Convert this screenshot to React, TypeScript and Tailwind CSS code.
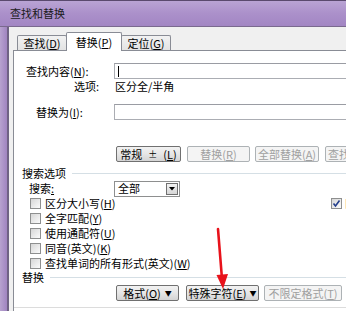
import React from 'react';

const Key = ({ k }: { k: string }) => (
  <span>
    (<span className="underline underline-offset-1">{k}</span>)
  </span>
);

const Check = ({ checked }: { checked?: boolean }) => (
  <div className="w-[11px] h-[11px] border border-[#8e8f8f] bg-gradient-to-br from-[#d6d6d6] to-[#fbfbfb] flex items-center justify-center shrink-0">
    {checked && (
      <svg width="9" height="9" viewBox="0 0 9 9">
        <path d="M1.5 4.5 L3.5 7 L7.5 1.5" fill="none" stroke="#233e8c" strokeWidth="1.6" />
      </svg>
    )}
  </div>
);

const Btn = ({ className, disabled, children }: { className: string; disabled?: boolean; children: React.ReactNode }) => (
  <div
    className={
      disabled
        ? `${className} h-[16px] shrink-0 flex items-center border border-[#adb2b5] rounded-[2px] bg-[#f4f4f4] text-[#a0a0a0]`
        : `${className} h-[16px] shrink-0 flex items-center border border-[#707070] rounded-[2px] bg-gradient-to-b from-[#f2f2f2] via-[#e6e6e6] to-[#d4d4d4] text-black`
    }
  >
    {children}
  </div>
);

const Tab = ({ selected, className, children }: { selected?: boolean; className: string; children: React.ReactNode }) => (
  <div
    className={
      selected
        ? `${className} h-[19px] -mb-[1px] relative z-10 bg-white border border-b-0 border-[#898c95] rounded-t-[2px] flex items-center justify-center`
        : `${className} h-[15px] bg-gradient-to-b from-[#f2f2f2] to-[#e3e3e3] border border-b-0 border-[#898c95] rounded-t-[2px] flex items-center justify-center`
    }
  >
    {children}
  </div>
);

const checks = [
  <>区分大小写<Key k="H" /></>,
  <>全字匹配<Key k="Y" /></>,
  <>使用通配符<Key k="U" /></>,
  <>同音(英文)<Key k="K" /></>,
  <>查找单词的所有形式(英文)<Key k="W" /></>,
];

export default function App() {
  return (
    <div className="relative w-[346px] h-[311px] overflow-hidden flex flex-col bg-[#f0f0f0] font-['Noto_Sans_CJK_SC','Noto_Sans',sans-serif] text-[11px] leading-none text-black">
      {/* title bar */}
      <div className="h-[27px] shrink-0 flex items-center pl-[10px] border-t border-[#5a4a6e] border-b border-b-[#7a6a8e] bg-gradient-to-b from-[#b9a4d4] via-[#ab90ca] to-[#a286c3] text-[#1b1b1b] text-[11px]">
        查找和替换
      </div>

      <div className="flex flex-1 min-h-0">
        {/* left frame */}
        <div className="w-[7px] shrink-0 bg-gradient-to-r from-[#b7a2cf] to-[#a084c0]" />
        <div className="w-[2px] shrink-0 bg-[#6f6284]" />

        {/* client */}
        <div className="flex-1 flex flex-col pl-[4px] min-w-0">
          {/* tabs */}
          <div className="h-[23px] shrink-0 flex items-end pl-[4px]">
            <Tab className="w-[50px]">查找<Key k="D" /></Tab>
            <Tab selected className="w-[56px] -ml-[1px]">替换<Key k="P" /></Tab>
            <Tab className="w-[50px] -ml-[1px]">定位<Key k="G" /></Tab>
          </div>

          {/* panel */}
          <div className="flex-1 w-[420px] bg-white border-l border-t border-[#898c95] flex flex-col">
            <div className="mt-[12px] h-[16px] flex items-center">
              <div className="w-[100px] pl-[12px] shrink-0">查找内容<Key k="N" />:</div>
              <div className="h-[16px] w-[300px] border border-[#abadb3] border-t-[#9a9ca3] bg-white flex items-center pl-[3px]">
                <div className="w-[1px] h-[11px] bg-black" />
              </div>
            </div>

            <div className="h-[14px] flex items-center">
              <div className="w-[100px] pl-[60px] shrink-0">选项:</div>
              <div className="pl-[1px]">区分全/半角</div>
            </div>

            <div className="mt-[11px] h-[16px] flex items-center">
              <div className="w-[100px] pl-[22px] shrink-0">替换为<Key k="I" />:</div>
              <div className="h-[16px] w-[300px] border border-[#abadb3] border-t-[#9a9ca3] bg-white" />
            </div>

            <div className="mt-[26px] flex items-center pl-[102px]">
              <Btn className="w-[65px] justify-center gap-[6px]">
                <span>常规</span>
                <span className="text-[9px]">±</span>
                <Key k="L" />
              </Btn>
              <Btn disabled className="w-[63px] ml-[6px] justify-center">替换<Key k="R" /></Btn>
              <Btn disabled className="w-[64px] ml-[5px] justify-center">全部替换<Key k="A" /></Btn>
              <Btn disabled className="w-[76px] ml-[6px] justify-start pl-[2px]">查找下一处<Key k="F" /></Btn>
            </div>

            <div className="mt-[5px] h-[12px] flex items-center pl-[8px]">
              <span>搜索选项</span>
              <div className="flex-1 ml-[6px] border-t border-[#d5dfe5]" />
            </div>

            <div className="mt-[2px] h-[15px] flex items-center">
              <div className="w-[100px] pl-[15px] shrink-0">搜索<span className="underline">:</span></div>
              <div className="w-[66px] h-[16px] border border-[#8e8f8f] bg-white flex items-center justify-between pl-[3px] pr-[1px]">
                <span>全部</span>
                <div className="w-[12px] h-[12px] border border-[#707070] bg-gradient-to-b from-[#f2f2f2] to-[#d6d6d6] flex items-center justify-center">
                  <svg width="6" height="4" viewBox="0 0 6 4">
                    <path d="M0 0 H6 L3 3.5 Z" fill="#000" />
                  </svg>
                </div>
              </div>
            </div>

            <div className="flex">
              <div className="w-[317px] shrink-0 flex flex-col pl-[16px]">
                {checks.map((c, i) => (
                  <div key={i} className="h-[15px] flex items-center gap-[4px]">
                    <Check />
                    <span>{c}</span>
                  </div>
                ))}
              </div>
              <div className="flex flex-col">
                <div className="h-[15px] flex items-center gap-[3px]">
                  <Check checked />
                  <span>区分前缀<Key k="X" /></span>
                </div>
              </div>
            </div>

            <div className="h-[12px] flex items-center pl-[8px]">
              <span>替换</span>
              <div className="flex-1 ml-[6px] border-t border-[#d5dfe5]" />
            </div>

            <div className="mt-[2px] flex items-center pl-[102px]">
              <Btn className="w-[63px] justify-center gap-[4px]">
                <span>格式<Key k="O" /></span>
                <span className="text-[7px]">▼</span>
              </Btn>
              <Btn className="w-[73px] ml-[7px] justify-center gap-[3px]">
                <span>特殊字符<Key k="E" /></span>
                <span className="text-[7px]">▼</span>
              </Btn>
              <Btn disabled className="w-[78px] ml-[5px] justify-center">不限定格式<Key k="T" /></Btn>
            </div>

            <div className="mt-[6px] border-t border-[#dcdcdc]" />
          </div>
        </div>
      </div>

      {/* red annotation arrow */}
      <svg className="absolute left-0 top-0 pointer-events-none" width="346" height="311" viewBox="0 0 346 311">
        <path d="M218 229 L222 279" stroke="#e8121b" strokeWidth="2.6" strokeLinecap="round" fill="none" />
        <path d="M216.5 275 L228 274 L223 289 Z" fill="#e8121b" />
      </svg>
    </div>
  );
}
